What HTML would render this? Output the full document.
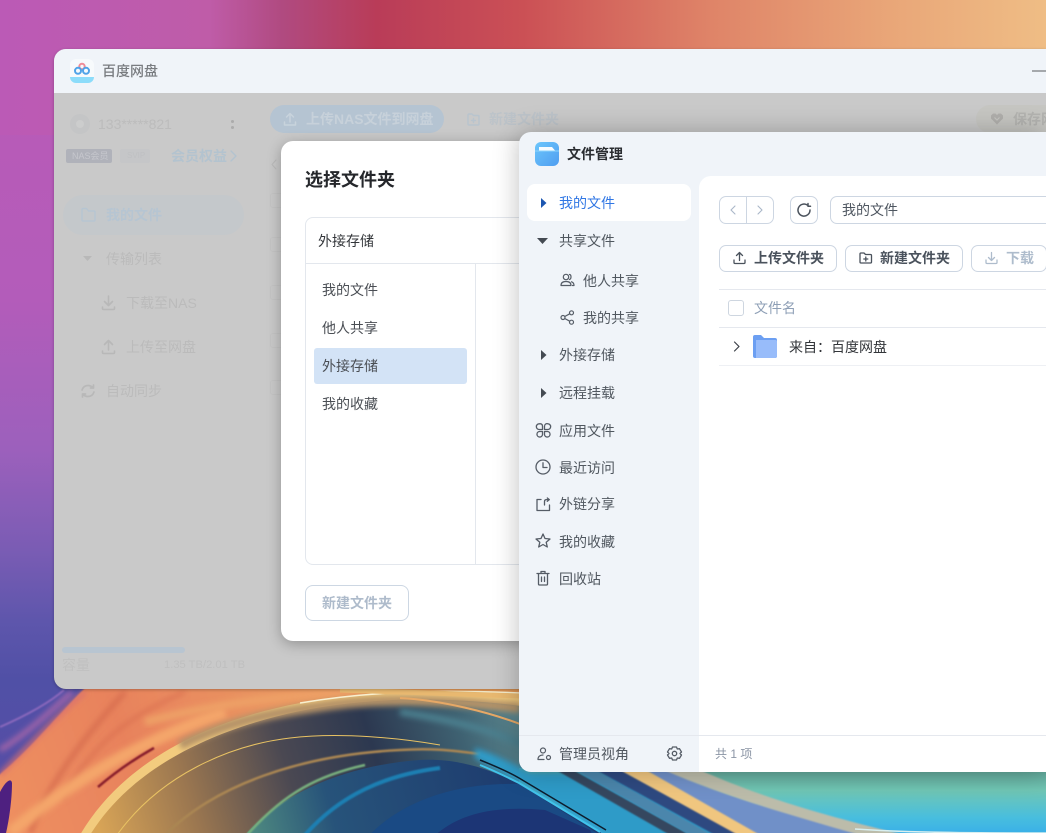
<!DOCTYPE html>
<html lang="zh"><head><meta charset="utf-8"><title>文件管理</title>
<style>
*{box-sizing:border-box;margin:0;padding:0}
html,body{width:1046px;height:833px;overflow:hidden}
body{position:relative;font-family:"Liberation Sans","Noto Sans CJK SC",sans-serif;font-size:14px;background:#b85cb8}
.a,.t{position:absolute}
.t{line-height:20px;height:20px;white-space:nowrap}
.b{font-weight:700}
svg{position:absolute;overflow:visible}
.i{fill:none;stroke-width:1.4;stroke-linecap:round;stroke-linejoin:round}
svg#bg{left:0;top:0;overflow:hidden}
#main{left:54px;top:49px;width:992px;height:640px;border-radius:12px 0 0 12px;overflow:hidden;background:#c9c9c9;box-shadow:0 1px 3px rgba(0,0,0,.25)}
#main .t{margin-left:-54px;margin-top:-49px}
#main .a,#main svg{margin-left:-54px;margin-top:-49px}
#main #tb{margin:0;left:0;top:0;width:100%;height:44px;background:#f0f4f9}
#modal{left:281px;top:141px;width:400px;height:500px;background:#fff;border-radius:12px;box-shadow:0 3px 14px rgba(0,0,0,.28)}
#fm{left:519px;top:132px;width:527px;height:640px;background:#f0f4f9;border-radius:12px 0 0 12px;box-shadow:0 0 26px rgba(0,0,0,.26);overflow:hidden}
#clip{left:0;top:0;width:1046px;height:833px;overflow:hidden}
.n{color:#50575f}
.btn{position:absolute;border:1px solid #cdd6e2;border-radius:7px;background:#fff}
</style></head><body>

<svg id="bg" width="1046" height="833" viewBox="0 0 1046 833">
<defs>
<linearGradient id="top" x1="0" y1="0" x2="1" y2="0">
<stop offset="0" stop-color="#bb5ab6"/><stop offset=".2" stop-color="#bf5ca8"/><stop offset=".27" stop-color="#b04a80"/><stop offset=".36" stop-color="#b93c58"/><stop offset=".5" stop-color="#cb5055"/><stop offset=".68" stop-color="#df8468"/><stop offset=".85" stop-color="#e9a678"/><stop offset="1" stop-color="#efbd85"/>
</linearGradient>
<linearGradient id="left" x1="0" y1="0" x2="0" y2="833" gradientUnits="userSpaceOnUse">
<stop offset="0" stop-color="#bb5ab6"/><stop offset=".36" stop-color="#b35cba"/><stop offset=".54" stop-color="#9c60bc"/><stop offset=".66" stop-color="#7a5cb4"/><stop offset=".745" stop-color="#5e56ac"/><stop offset=".816" stop-color="#5050a6"/><stop offset="1" stop-color="#5a4ca6"/>
</linearGradient>
<linearGradient id="or" x1="0" y1="833" x2="400" y2="690" gradientUnits="userSpaceOnUse">
<stop offset="0" stop-color="#ee9060"/><stop offset=".35" stop-color="#e8825c"/><stop offset=".7" stop-color="#e99460"/><stop offset="1" stop-color="#e59a58"/>
</linearGradient>
<linearGradient id="arc" x1="100" y1="833" x2="520" y2="700" gradientUnits="userSpaceOnUse">
<stop offset="0" stop-color="#d8a456"/><stop offset=".22" stop-color="#9a7650"/><stop offset=".45" stop-color="#4a4852"/><stop offset=".65" stop-color="#2c3850"/><stop offset=".85" stop-color="#3f6272"/><stop offset="1" stop-color="#5d8a92"/>
</linearGradient>
<linearGradient id="bl1" x1="250" y1="833" x2="520" y2="760" gradientUnits="userSpaceOnUse">
<stop offset="0" stop-color="#4f8a80"/><stop offset=".3" stop-color="#27537a"/><stop offset="1" stop-color="#1d3a6e"/>
</linearGradient>
<linearGradient id="tl" x1="0" y1="772" x2="0" y2="833" gradientUnits="userSpaceOnUse">
<stop offset="0" stop-color="#62a89a"/><stop offset=".3" stop-color="#70c6b4"/><stop offset=".75" stop-color="#48bede"/><stop offset="1" stop-color="#3ab0e8"/>
</linearGradient>
<filter id="bl" x="-20%" y="-20%" width="140%" height="140%"><feGaussianBlur stdDeviation=".9"/></filter>
<filter id="bl3" x="-20%" y="-20%" width="140%" height="140%"><feGaussianBlur stdDeviation="3"/></filter>
</defs>
<rect width="1046" height="833" fill="url(#left)"/>
<rect width="1046" height="135" fill="url(#top)"/>

<path d="M-5 778 C25 755 60 712 88 685 L560 685 L560 840 L-5 840Z" fill="url(#or)" filter="url(#bl)"/>
<path d="M0 727 C25 716 48 704 64 690" stroke="#8a68bc" stroke-width="2" fill="none" filter="url(#bl)"/>
<path d="M0 750 C25 735 50 712 72 692" stroke="#a866a8" stroke-width="5" fill="none" filter="url(#bl3)"/>
<path d="M0 775 C25 750 55 718 85 692" stroke="#d9706e" stroke-width="4" fill="none" filter="url(#bl3)"/>
<path d="M30 833 C50 780 90 730 125 692" stroke="#d86e50" stroke-width="5" fill="none" filter="url(#bl3)"/>
<path d="M62 800 C90 745 130 715 185 692" stroke="#d96e50" stroke-width="3" fill="none" filter="url(#bl3)"/>
<path d="M10 833 C60 790 130 745 225 712" stroke="#f4a66a" stroke-width="12" fill="none" filter="url(#bl3)"/>
<path d="M145 722 C210 705 280 695 360 692" stroke="#eea066" stroke-width="8" fill="none" filter="url(#bl3)"/>
<path d="M0 792 C5 782 11 777 12 783 C12 800 9 820 6 833 L0 833Z" fill="#4e2080"/>

<path d="M80 835 C115 775 185 725 300 703 C375 690 470 690 560 694 L700 840 L80 840Z" fill="#f2cb7e"/>
<path d="M98 787 C118 770 136 758 154 748" stroke="#861a2a" stroke-width="2.500" fill="none" filter="url(#bl)"/>
<path d="M90 835 C125 778 195 733 300 711 C380 695 470 696 560 712 L700 840 L90 840Z" fill="url(#arc)"/>
<path d="M180 745 C220 725 260 715 310 708 C370 698 430 698 520 708" stroke="#b59368" stroke-width="10" fill="none" filter="url(#bl3)"/>
<path d="M300 703 C375 690 450 690 520 693" stroke="#f8f0d0" stroke-width="1.500" fill="none"/>
<path d="M117 835 C160 775 230 745 290 738 C340 732 400 738 440 745" fill="none" stroke="#e8c263" stroke-width="1"/>
<path d="M165 835 C215 785 300 755 400 750 C430 748 450 750 480 754" fill="none" stroke="#aa8652" stroke-width="2.500" filter="url(#bl)"/>
<path d="M400 712 C440 718 490 728 530 748" stroke="#4b7f8e" stroke-width="7" fill="none" filter="url(#bl3)"/>
<path d="M340 690 L520 696" stroke="#e8b870" stroke-width="5" fill="none"/>
<path d="M400 698 C440 700 490 712 525 726" stroke="#e6a866" stroke-width="2" fill="none"/>

<path d="M519 768 H1050 V840 H519Z" fill="url(#tl)"/>
<path d="M475 748 C495 754 512 764 530 772 L700 772 L770 840 L608 840 L600 832 L519 783 C505 775 490 766 475 758Z" fill="#2f9bc8" filter="url(#bl3)"/>
<path d="M245 835 C285 790 350 765 420 760 C460 758 490 770 519 783 L600 832 L610 840 L245 840Z" fill="url(#bl1)"/>
<path d="M247 835 C285 792 320 775 365 765" fill="none" stroke="#78b07e" stroke-width="2.500" filter="url(#bl)"/>
<path d="M305 835 C340 795 385 775 440 768" fill="none" stroke="#1c7fb2" stroke-width="4" filter="url(#bl)"/>
<path d="M365 840 C395 805 450 782 519 784 L600 835 L605 840Z" fill="#1a4a84"/>
<path d="M430 840 C455 815 490 805 545 810 L590 830 L595 840Z" fill="#1c3575"/>
<path d="M480 760 C495 766 507 771 519 778 L606 830" stroke="#0d1c2c" stroke-width="1.500" fill="none"/>
<path d="M480 765 C495 771 507 777 519 783 L600 832" stroke="#41c4ec" stroke-width="2" fill="none"/>
<path d="M556 770 L573 770 L690 835 L670 835Z" fill="#36465f" filter="url(#bl)"/>
<path d="M575 770 L596 770 L712 835 L690 835Z" fill="#4c86ac" filter="url(#bl)"/>
<path d="M596 770 L622 770 L745 835 L715 835Z" fill="#2e4a80" filter="url(#bl)"/>
<path d="M645 770 L668 770 C720 795 790 815 880 835 L745 835Z" fill="#6f90c8" filter="url(#bl)"/>
<path d="M620 770 L646 770 L760 835 L738 835Z" fill="#f0c67f" filter="url(#bl)"/>
<path d="M664 770 L700 770 C745 790 800 810 905 835 L860 835 C790 815 720 795 664 770Z" fill="#bcbcaa" filter="url(#bl)"/>
<path d="M855 829 C900 832 950 833 1046 833" stroke="#d8eff0" stroke-width="1.500" fill="none"/>
</svg>

<div id="clip" class="a">
<div id="main" class="a">
 <div id="tb" class="a"></div>
 <svg style="left:70px;top:59px" width="24" height="24" viewBox="0 0 24 24">
  <rect width="24" height="24" rx="6" fill="#f7fafc"/>
  <path d="M0 18H24V18a6 6 0 0 1-6 6H6a6 6 0 0 1-6-6Z" fill="#8cdcfa"/>
  <circle cx="12" cy="7.500" r="2.700" fill="none" stroke="#f08c98" stroke-width="2"/>
  <circle cx="8" cy="11.800" r="3" fill="none" stroke="#4fa3e8" stroke-width="2"/>
  <circle cx="16" cy="11.800" r="3" fill="none" stroke="#4fa3e8" stroke-width="2"/>
 </svg>
 <div class="t" style="left:102px;top:61px;color:#797c80;font-weight:500">百度网盘</div>
 <div class="a" style="left:1032px;top:70px;width:20px;height:2px;background:#a5a8ac"></div>

 <div class="a" style="left:70px;top:114px;width:20px;height:20px;border-radius:50%;background:#c4c5c6"></div>
 <div class="a" style="left:76px;top:120px;width:8px;height:8px;border-radius:50%;background:#cccdcd"></div>
 <div class="t" style="left:98px;top:114px;color:#bcbcbc">133*****821</div>
 <div class="a" style="left:231px;top:120px;width:3px;height:3px;border-radius:50%;background:#acacac"></div>
 <div class="a" style="left:231px;top:126px;width:3px;height:3px;border-radius:50%;background:#acacac"></div>
 <div class="a" style="left:66px;top:149px;width:46px;height:14px;background:#b0b2ba;border-radius:2px"></div>
 <div class="t" style="left:72px;top:146px;font-size:9px;color:#c6c7cd">NAS会员</div>
 <div class="a" style="left:120px;top:149px;width:30px;height:14px;background:#c5c6c8;border-radius:2px"></div>
 <div class="t" style="left:127px;top:146px;font-size:8px;color:#bfc0c3">SVIP</div>
 <div class="t b" style="left:171px;top:146px;color:#b3c3cf">会员权益</div>
 <svg class="i" style="left:229px;top:150px" width="8" height="12" stroke="#b3c3cf"><path d="M2 1 7 6 2 11"/></svg>

 <div class="a" style="left:63px;top:195px;width:181px;height:40px;background:#c4c8cb;border-radius:20px"></div>
 <svg class="i" style="left:81px;top:207px" width="15" height="15" stroke="#b6c5d2"><path d="M1 2.500a1 1 0 0 1 1-1h3.500l2 2.500H13a1 1 0 0 1 1 1V13a1 1 0 0 1-1 1H2a1 1 0 0 1-1-1Z"/></svg>
 <div class="t b" style="left:106px;top:205px;color:#b6c5d2">我的文件</div>
 <svg style="left:83px;top:256px" width="10" height="6"><path d="M0 0H9L4.500 5Z" fill="#b8b8b8"/></svg>
 <div class="t" style="left:106px;top:249px;color:#bbbbbb">传输列表</div>
 <svg class="i" style="left:101px;top:295px;stroke-width:1.600" width="15" height="16" stroke="#b8b8b8"><path d="M7.500 1V10M3.500 6.500 7.500 10.500 11.500 6.500M1.500 12V13.500a1 1 0 0 0 1 1H12.500a1 1 0 0 0 1-1V12"/></svg>
 <div class="t" style="left:126px;top:293px;color:#bbbbbb">下载至NAS</div>
 <svg class="i" style="left:101px;top:339px;stroke-width:1.600" width="15" height="16" stroke="#b8b8b8"><path d="M7.500 11V2M3.500 5.500 7.500 1.500 11.500 5.500M1.500 12V13.500a1 1 0 0 0 1 1H12.500a1 1 0 0 0 1-1V12"/></svg>
 <div class="t" style="left:126px;top:337px;color:#bbbbbb">上传至网盘</div>
 <svg class="i" style="left:81px;top:384px;stroke-width:1.700" width="14" height="14" stroke="#b8b8b8"><path d="M1 6C2 3 4 1.500 7 1.500 9.500 1.500 11 2.500 12.500 4M12.500 1V4H9.500M13 8C12 11 10 12.500 7 12.500 4.500 12.500 3 11.500 1.500 10M1.500 13V10H4.500"/></svg>
 <div class="t" style="left:106px;top:381px;color:#bbbbbb">自动同步</div>

 <div class="a" style="left:62px;top:647px;width:123px;height:6px;border-radius:3px;background:#b8c5d1"></div>
 <div class="t" style="left:62px;top:655px;color:#c0c0c0">容量</div>
 <div class="t" style="left:164px;top:655px;font-size:11.200px;color:#bfbfbf">1.35 TB/2.01 TB</div>

 <div class="a" style="left:270px;top:105px;width:174px;height:28px;border-radius:14px;background:#b5c4d2"></div>
 <svg class="i" style="left:283px;top:112px;stroke-width:1.500" width="14" height="15" stroke="#c8d3dc"><path d="M7 10V2M3.500 5 7 1.500 10.500 5M1.500 10V13H12.500V10"/></svg>
 <div class="t b" style="left:306px;top:109px;color:#c7d1da">上传NAS文件到网盘</div>
 <svg class="i" style="left:467px;top:113px" width="13" height="13" stroke="#b8c4ce"><path d="M1 2a1 1 0 0 1 1-1h3l1.500 1.500H11a1 1 0 0 1 1 1V11a1 1 0 0 1-1 1H2a1 1 0 0 1-1-1ZM6.500 5.500v4M4.500 7.500h4"/></svg>
 <div class="t b" style="left:489px;top:109px;color:#bcc3c9">新建文件夹</div>
 <div class="a" style="left:976px;top:105px;width:120px;height:28px;border-radius:14px;background:#c6c6c2"></div>
 <svg style="left:990px;top:113px" width="14" height="12"><path d="M7 11.500 1 5.500V2.500L3 .5H5.500L7 2 8.500 .5H11L13 2.500V5.500Z" fill="#b0afac"/><path d="M4.500 4.500 7 7 9.500 4.500" stroke="#c6c6c2" fill="none" stroke-width="1.200"/></svg>
 <div class="t b" style="left:1013px;top:109px;color:#b3b3b0">保存网盘</div>

 <svg class="i" style="left:271px;top:159px;stroke-width:1" width="7" height="12" stroke="#bababa"><path d="M5 1 1 5.500 5 10"/></svg>
 <div class="a" style="left:270px;top:193px;width:20px;height:15px;border:1px solid #c4c4c4;border-radius:3px"></div>
 <div class="a" style="left:270px;top:237px;width:20px;height:15px;border:1px solid #c4c4c4;border-radius:3px"></div>
 <div class="a" style="left:270px;top:285px;width:20px;height:15px;border:1px solid #c4c4c4;border-radius:3px"></div>
 <div class="a" style="left:270px;top:333px;width:20px;height:15px;border:1px solid #c4c4c4;border-radius:3px"></div>
 <div class="a" style="left:270px;top:380px;width:20px;height:15px;border:1px solid #c4c4c4;border-radius:3px"></div>
</div>

<div id="modal" class="a"></div>
<div class="t b" style="left:305px;top:170px;font-size:18px;color:#25272b">选择文件夹</div>
<div class="a" style="left:305px;top:217px;width:300px;height:348px;border:1px solid #e3e7ed;border-radius:8px"></div>
<div class="a" style="left:306px;top:263px;width:300px;height:1px;background:#e3e7ed"></div>
<div class="a" style="left:475px;top:264px;width:1px;height:300px;background:#e3e7ed"></div>
<div class="t" style="left:318px;top:231px;color:#33363a">外接存储</div>
<div class="a" style="left:314px;top:348px;width:153px;height:36px;background:#d3e3f6;border-radius:3px"></div>
<div class="t" style="left:322px;top:280px;color:#4a4e54">我的文件</div>
<div class="t" style="left:322px;top:318px;color:#4a4e54">他人共享</div>
<div class="t" style="left:322px;top:356px;color:#4a4e54">外接存储</div>
<div class="t" style="left:322px;top:394px;color:#4a4e54">我的收藏</div>
<div class="a" style="left:305px;top:585px;width:104px;height:36px;border:1px solid #cdd7e3;border-radius:8px"></div>
<div class="t b" style="left:322px;top:593px;color:#aebbcb">新建文件夹</div>

<div id="fm" class="a"></div>
<div class="a" style="left:699px;top:176px;width:347px;height:560px;background:#fff;border-top-left-radius:12px"></div>
<div class="a" style="left:519px;top:735px;width:527px;height:1px;background:#e5e8ee"></div>
<div class="a" style="left:699px;top:736px;width:347px;height:36px;background:#fff"></div>

<svg style="left:535px;top:142px" width="24" height="24" viewBox="0 0 24 24">
 <defs><linearGradient id="fi" x1="0" y1="0" x2="1" y2="1"><stop offset="0" stop-color="#6cc6fc"/><stop offset="1" stop-color="#4f9df0"/></linearGradient></defs>
 <rect width="24" height="24" rx="6" fill="url(#fi)"/>
 <path d="M4 5H17L20 8.500H4Z" fill="#fff" opacity=".95"/>
 <path d="M0 9H24" stroke="#8dd4fc" stroke-width="1"/>
</svg>
<div class="t b" style="left:567px;top:144px;color:#2a2d31">文件管理</div>

<div class="a" style="left:527px;top:184px;width:164px;height:37px;border-radius:8px;background:#fff"></div>
<svg style="left:541px;top:198px" width="6" height="10"><path d="M0 0 5.500 5 0 10Z" fill="#1c56b0"/></svg>
<div class="t" style="left:559px;top:193px;color:#2f76e4">我的文件</div>
<svg style="left:537px;top:238px" width="11" height="6"><path d="M0 0H11L5.500 6Z" fill="#444a52"/></svg>
<div class="t n" style="left:559px;top:231px">共享文件</div>
<svg class="i" style="left:560px;top:273px;stroke-width:1.200" width="15" height="15" stroke="#555c66"><circle cx="6" cy="4" r="2.700"/><path d="M1 12.500C1 9.500 3 8.500 6 8.500 9 8.500 11 9.500 11 12.500ZM9.500 1.500C11.500 1.800 11.500 6 9.500 6.500M11.500 8.800C13 9.300 14 10.500 14 12.500H12.500"/></svg>
<div class="t n" style="left:583px;top:271px">他人共享</div>
<svg class="i" style="left:560px;top:310px;stroke-width:1.200" width="15" height="15" stroke="#555c66"><circle cx="11.500" cy="2.800" r="2"/><circle cx="3" cy="7.500" r="2"/><circle cx="11.500" cy="12.200" r="2"/><path d="M5 6.400 9.700 3.800M5 8.600 9.700 11.200"/></svg>
<div class="t n" style="left:583px;top:308px">我的共享</div>
<svg style="left:541px;top:350px" width="6" height="10"><path d="M0 0 5.500 5 0 10Z" fill="#444a52"/></svg>
<div class="t n" style="left:559px;top:345px">外接存储</div>
<svg style="left:541px;top:388px" width="6" height="10"><path d="M0 0 5.500 5 0 10Z" fill="#444a52"/></svg>
<div class="t n" style="left:559px;top:383px">远程挂载</div>
<svg class="i" style="left:536px;top:423px;stroke-width:1.300" width="15" height="15" stroke="#555c66"><path d="M3.200 .8H4.800A2.500 2.500 0 0 1 6.500 3.200V6.500H3.200A2.500 2.500 0 0 1 3.200 .8ZM11.800 .8A2.800 2.800 0 0 1 11.800 6.500H8.500V3.200A2.500 2.500 0 0 1 11.800 .8ZM3.200 8.500H6.500V11.800A2.800 2.800 0 1 1 3.200 8.500ZM8.500 8.500H11.800A2.800 2.800 0 1 1 8.500 11.800Z"/></svg>
<div class="t n" style="left:559px;top:421px">应用文件</div>
<svg class="i" style="left:535px;top:459px;stroke-width:1.300" width="16" height="16" stroke="#555c66"><circle cx="8" cy="8" r="7"/><path d="M8 3.800V8.500H12"/></svg>
<div class="t n" style="left:559px;top:458px">最近访问</div>
<svg class="i" style="left:536px;top:497px;stroke-width:1.300" width="15" height="15" stroke="#555c66"><path d="M5 2.500H1V13.500H13.500V8M8.500 8V4.500C8.500 3.300 9.300 2.600 10.500 2.600H13M11.300 1 13.300 2.600 11.300 4.300"/></svg>
<div class="t n" style="left:559px;top:494px">外链分享</div>
<svg class="i" style="left:535px;top:533px;stroke-width:1.300" width="16" height="15" stroke="#555c66"><path d="M8 1 10 5.500 15 6 11.200 9.300 12.300 14 8 11.500 3.700 14 4.800 9.300 1 6 6 5.500Z"/></svg>
<div class="t n" style="left:559px;top:532px">我的收藏</div>
<svg class="i" style="left:536px;top:570px;stroke-width:1.300" width="14" height="16" stroke="#555c66"><path d="M1 3.500H13M5 3.500V1.500H9V3.500M2.500 3.500V14A1 1 0 0 0 3.500 15H10.500A1 1 0 0 0 11.500 14V3.500M5.500 7V11.500M8.500 7V11.500"/></svg>
<div class="t n" style="left:559px;top:569px">回收站</div>

<svg class="i" style="left:537px;top:747px;stroke-width:1.200" width="15" height="14" stroke="#555c66"><circle cx="6" cy="3.500" r="2.500"/><path d="M1 12.500C1 9.500 3 8 6 8M1 12.500H7"/><circle cx="11.500" cy="10.500" r="2"/></svg>
<div class="t n" style="left:559px;top:744px">管理员视角</div>
<svg class="i" style="left:667px;top:746px;stroke-width:1.300" width="15" height="15" stroke="#555c66"><path d="M5.500 1H9.500L10.300 3 12.500 2.700 14.500 6 13 7.500 14.500 9 12.500 12.300 10.300 12 9.500 14H5.500L4.700 12 2.500 12.300 .5 9 2 7.500 .5 6 2.500 2.700 4.700 3Z"/><circle cx="7.500" cy="7.500" r="2.200"/></svg>
<div class="t" style="left:715px;top:744px;font-size:12px;color:#8b95a5">共 1 项</div>

<div class="btn" style="left:719px;top:196px;width:55px;height:28px"></div>
<div class="a" style="left:746px;top:197px;width:1px;height:26px;background:#cdd6e2"></div>
<svg class="i" style="left:730px;top:205px;stroke-width:1.100" width="6" height="10" stroke="#aab7c8"><path d="M5 1 1 5 5 9"/></svg>
<svg class="i" style="left:757px;top:205px;stroke-width:1.100" width="6" height="10" stroke="#aab7c8"><path d="M1 1 5 5 1 9"/></svg>
<div class="btn" style="left:790px;top:196px;width:28px;height:28px"></div>
<svg class="i" style="left:797px;top:203px;stroke-width:1.500" width="14" height="14" stroke="#4a525c"><path d="M13 7A6 6 0 1 1 10.500 2.200M11 .5V3.200H13.500"/></svg>
<div class="btn" style="left:830px;top:196px;width:260px;height:28px"></div>
<div class="t" style="left:842px;top:200px;color:#4e5660">我的文件</div>

<div class="btn" style="left:719px;top:245px;width:118px;height:27px"></div>
<svg class="i" style="left:733px;top:251px;stroke-width:1.300" width="13" height="14" stroke="#4a525c"><path d="M6.500 9.500V1.500M3.500 4.500 6.500 1.500 9.500 4.500M1 9V11.500A1 1 0 0 0 2 12.500H11A1 1 0 0 0 12 11.500V9"/></svg>
<div class="t b" style="left:754px;top:248px;color:#4a525c">上传文件夹</div>
<div class="btn" style="left:845px;top:245px;width:118px;height:27px"></div>
<svg class="i" style="left:859px;top:252px;stroke-width:1.300" width="13" height="12" stroke="#4a525c"><path d="M1 2A1 1 0 0 1 2 1H5L6.500 2.500H11.500A1 1 0 0 1 12.500 3.500V10A1 1 0 0 1 11.500 11H2A1 1 0 0 1 1 10ZM6.800 5V9M4.800 7H8.800"/></svg>
<div class="t b" style="left:880px;top:248px;color:#4a525c">新建文件夹</div>
<div class="btn" style="left:971px;top:245px;width:76px;height:27px"></div>
<svg class="i" style="left:985px;top:251px;stroke-width:1.300" width="13" height="14" stroke="#aebccc"><path d="M6.500 1.500V9.500M3.500 6.500 6.500 9.500 9.500 6.500M1 9V11.500A1 1 0 0 0 2 12.500H11A1 1 0 0 0 12 11.500V9"/></svg>
<div class="t b" style="left:1006px;top:248px;color:#aebccc">下载</div>

<div class="a" style="left:719px;top:289px;width:327px;height:1px;background:#e5e8ee"></div>
<div class="a" style="left:728px;top:300px;width:16px;height:16px;border:1px solid #ced6e0;border-radius:3px"></div>
<div class="t" style="left:754px;top:298px;color:#8e9fb6">文件名</div>
<div class="a" style="left:719px;top:327px;width:327px;height:1px;background:#e5e8ee"></div>
<svg class="i" style="left:733px;top:341px;stroke-width:1.200" width="7" height="11" stroke="#3c4148"><path d="M1.500 1 6 5.500 1.500 10"/></svg>
<svg style="left:752px;top:335px" width="26" height="24"><path d="M1 2A2 2 0 0 1 3 0H9L12 3H23A2 2 0 0 1 25 5V21A2 2 0 0 1 23 23H3A2 2 0 0 1 1 21Z" fill="#6c9ff2"/><path d="M4 5H23.500A1.500 1.500 0 0 1 25 6.500V21A2 2 0 0 1 23 23H4Z" fill="#98bcfa"/></svg>
<div class="t" style="left:789px;top:337px;color:#33363a">来自：百度网盘</div>
<div class="a" style="left:719px;top:365px;width:327px;height:1px;background:#eef0f4"></div>
</div>
</body></html>
